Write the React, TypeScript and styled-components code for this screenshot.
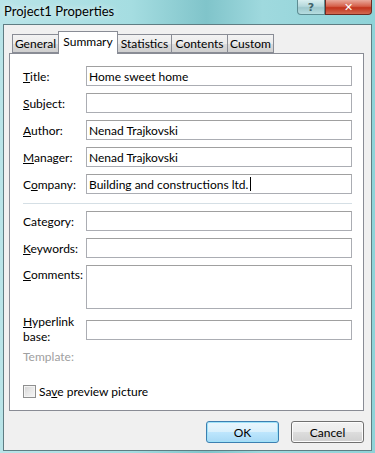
import React from "react";
import styled, { createGlobalStyle } from "styled-components";

const FONT = `"Lato", "Open Sans", Arial, sans-serif`;

const Global = createGlobalStyle`
  html, body { margin: 0; padding: 0; }
  body { font-family: ${FONT}; font-size: 12px; }
`;

const Window = styled.div`
  width: 375px;
  height: 453px;
  box-sizing: border-box;
  display: flex;
  flex-direction: column;
  background: linear-gradient(90deg, #b9e4e8 0%, #a5dde1 35%, #80c4ca 55%, #9fd9de 70%, #8fd3d8 100%);
  overflow: hidden;
`;

const TitleBar = styled.div`
  height: 24px;
  display: flex;
  align-items: flex-start;
  justify-content: space-between;
  padding: 0 3px 0 4px;
  box-sizing: border-box;
`;

const TitleText = styled.div`
  font-family: ${FONT};
  font-size: 13px;
  line-height: 15px;
  padding-top: 4px;
  color: #000;
  text-shadow: 0 0 6px rgba(255, 255, 255, 0.9);
`;

const CaptionButtons = styled.div`
  display: flex;
`;

const CaptionButton = styled.div<{ $close?: boolean }>`
  width: ${(p) => (p.$close ? "47px" : "28px")};
  height: 15px;
  box-sizing: border-box;
  border: 1px solid ${(p) => (p.$close ? "#6d2a22" : "#5d8c92")};
  border-top: none;
  border-radius: ${(p) => (p.$close ? "0 0 4px 0" : "0 0 0 4px")};
  background: ${(p) =>
    p.$close
      ? "linear-gradient(180deg, #e9a99c 0%, #d5604a 45%, #c2331c 55%, #d26a52 100%)"
      : "linear-gradient(180deg, #d9eef0 0%, #b5d8dc 45%, #9ec8cd 55%, #b6dde0 100%)"};
  display: flex;
  align-items: center;
  justify-content: center;
  color: ${(p) => (p.$close ? "#fff" : "#40626a")};
  font-family: "DejaVu Sans", sans-serif;
  font-weight: bold;
  font-size: 11px;
  line-height: 1;
`;

const Client = styled.div`
  flex: 1;
  margin: 0 3px 2px 3px;
  border: 1px solid #5f7d83;
  background: #f0f0f0;
  display: flex;
  flex-direction: column;
  padding: 6px 8px 0 5px;
  box-sizing: border-box;
`;

const TabStrip = styled.div`
  display: flex;
  align-items: flex-end;
  padding-left: 3px;
  height: 22px;
  position: relative;
  z-index: 1;
`;

const Tab = styled.div<{ $active?: boolean; $w: number }>`
  box-sizing: border-box;
  height: ${(p) => (p.$active ? "23px" : "19px")};
  margin-bottom: ${(p) => (p.$active ? "-1px" : "0")};
  padding-top: ${(p) => (p.$active ? "2px" : "0")};
  border: 1px solid #898c95;
  border-bottom: ${(p) => (p.$active ? "none" : "1px solid #898c95")};
  margin-left: -1px;
  background: ${(p) =>
    p.$active ? "#fff" : "linear-gradient(180deg, #f3f3f3 0%, #ebebeb 50%, #dddddd 51%, #cfcfcf 100%)"};
  width: ${(p) => p.$w}px;
  display: flex;
  justify-content: center;
  align-items: ${(p) => (p.$active ? "flex-start" : "center")};
  font-size: 12px;
  line-height: 15px;
  color: #000;
  &:first-child {
    margin-left: 0;
  }
`;

const Panel = styled.div`
  height: 358px;
  width: 355px;
  box-sizing: border-box;
  border: 1px solid #898c95;
  background: #fff;
  padding: 12px 10px 0 13px;
  display: flex;
  flex-direction: column;
`;

const Row = styled.div<{ $h?: number; $gap?: number; $top?: boolean }>`
  display: flex;
  align-items: ${(p) => (p.$top ? "flex-start" : "center")};
  height: ${(p) => p.$h ?? 20}px;
  margin-bottom: ${(p) => p.$gap ?? 7}px;
`;

const Label = styled.div<{ $disabled?: boolean; $shift?: number }>`
  width: 63px;
  flex: none;
  font-size: 12px;
  line-height: 15px;
  color: ${(p) => (p.$disabled ? "#a0a0a0" : "#000")};
  margin-top: ${(p) => p.$shift ?? 0}px;
  u {
    text-decoration: underline;
    text-underline-offset: 1px;
  }
`;

const Field = styled.div<{ $h?: number }>`
  width: 266px;
  height: ${(p) => p.$h ?? 20}px;
  box-sizing: border-box;
  border: 1px solid #abadb3;
  border-top-color: #a0a0a0;
  background: #fff;
  padding: 0 2px;
  display: flex;
  align-items: center;
  font-size: 12px;
  color: #000;
  white-space: nowrap;
`;

const Caret = styled.span`
  display: inline-block;
  width: 1px;
  height: 14px;
  background: #000;
  margin-left: 2px;
`;

const Separator = styled.div`
  height: 1px;
  background: #d5dfe5;
  width: 329px;
  margin: 1px 0 7px;
`;

const CheckRow = styled.div`
  display: flex;
  align-items: center;
  gap: 3px;
  height: 15px;
  margin-top: 20px;
  font-size: 12px;
  line-height: 15px;
  u {
    text-decoration: underline;
    text-underline-offset: 1px;
  }
`;

const Box = styled.div`
  width: 13px;
  height: 13px;
  box-sizing: border-box;
  border: 1px solid #8e8f8f;
  background: linear-gradient(135deg, #d2d2d2 0%, #e8e8e8 50%, #f6f6f6 100%);
  box-shadow: inset 0 0 0 1px #f4f4f4;
`;

const Footer = styled.div`
  display: flex;
  justify-content: flex-end;
  gap: 12px;
  padding: 10px 0 0;
  margin-right: -1px;
`;

const Button = styled.div<{ $default?: boolean }>`
  width: 73px;
  height: 22px;
  box-sizing: border-box;
  border-radius: 3px;
  border: 1px solid ${(p) => (p.$default ? "#3c7fb1" : "#707070")};
  background: ${(p) =>
    p.$default
      ? "linear-gradient(180deg, #eaf6fd 0%, #d9f0fc 50%, #bee6fd 51%, #a7d9f5 100%)"
      : "linear-gradient(180deg, #f2f2f2 0%, #ebebeb 50%, #dddddd 51%, #cfcfcf 100%)"};
  box-shadow: ${(p) => (p.$default ? "inset 0 0 0 1px #9fe2f8" : "inset 0 0 0 1px #fcfcfc")};
  display: flex;
  align-items: center;
  justify-content: center;
  font-size: 12px;
  color: #000;
`;

const tabs = [
  { t: "General", w: 47 },
  { t: "Summary", w: 60, a: true },
  { t: "Statistics", w: 55 },
  { t: "Contents", w: 57 },
  { t: "Custom", w: 47 },
];

export default function App() {
  return (
    <>
      <Global />
      <Window>
        <TitleBar>
          <TitleText>Project1 Properties</TitleText>
          <CaptionButtons>
            <CaptionButton>?</CaptionButton>
            <CaptionButton $close>✕</CaptionButton>
          </CaptionButtons>
        </TitleBar>
        <Client>
          <TabStrip>
            {tabs.map((t) => (
              <Tab key={t.t} $active={t.a} $w={t.w}>
                {t.t}
              </Tab>
            ))}
          </TabStrip>
          <Panel>
            <Row>
              <Label>
                <u>T</u>itle:
              </Label>
              <Field>Home sweet home</Field>
            </Row>
            <Row>
              <Label>
                <u>S</u>ubject:
              </Label>
              <Field />
            </Row>
            <Row>
              <Label>
                <u>A</u>uthor:
              </Label>
              <Field>Nenad Trajkovski</Field>
            </Row>
            <Row>
              <Label>
                <u>M</u>anager:
              </Label>
              <Field>Nenad Trajkovski</Field>
            </Row>
            <Row $gap={8}>
              <Label>
                C<u>o</u>mpany:
              </Label>
              <Field>
                Building and constructions ltd.
                <Caret />
              </Field>
            </Row>
            <Separator />
            <Row>
              <Label>
                Cate<u>g</u>ory:
              </Label>
              <Field />
            </Row>
            <Row>
              <Label>
                <u>K</u>eywords:
              </Label>
              <Field />
            </Row>
            <Row $h={44} $gap={11} $top>
              <Label $shift={2}>
                <u>C</u>omments:
              </Label>
              <Field $h={44} />
            </Row>
            <Row $gap={9} $top>
              <Label $shift={-6}>
                <u>H</u>yperlink
                <br />
                base:
              </Label>
              <Field />
            </Row>
            <Row $h={15} $gap={0}>
              <Label $disabled>Template:</Label>
            </Row>
            <CheckRow>
              <Box />
              <span>
                Sa<u>v</u>e preview picture
              </span>
            </CheckRow>
          </Panel>
          <Footer>
            <Button $default>OK</Button>
            <Button>Cancel</Button>
          </Footer>
        </Client>
      </Window>
    </>
  );
}
